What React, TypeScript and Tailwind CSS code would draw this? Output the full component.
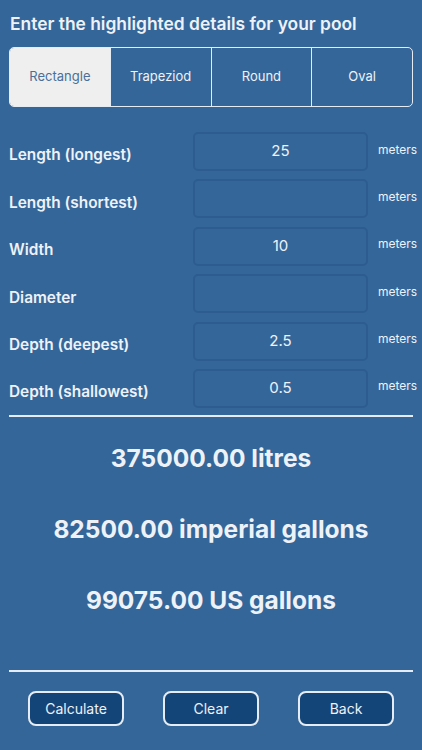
import React from "react";

const rows = [
  { label: "Length (longest)", value: "25" },
  { label: "Length (shortest)", value: "" },
  { label: "Width", value: "10" },
  { label: "Diameter", value: "" },
  { label: "Depth (deepest)", value: "2.5" },
  { label: "Depth (shallowest)", value: "0.5" },
];

const tabs = ["Rectangle", "Trapeziod", "Round", "Oval"];

export default function App() {
  return (
    <div
      className="w-[422px] h-[750px] bg-[#34669a] text-[#eef2f7] overflow-hidden flex flex-col"
      style={{ fontFamily: "Inter, 'Noto Sans', sans-serif" }}
    >
      <div className="pl-[10px] pt-[12px] text-[17.4px] leading-[24px] font-semibold">
        Enter the highlighted details for your pool
      </div>

      <div className="mx-[9px] mt-[11px] h-[60px] flex border border-[#e6ecf3] rounded-[5px] overflow-hidden">
        {tabs.map((t, i) => (
          <div
            key={t}
            className={
              i === 0
                ? "flex-1 flex items-center justify-center bg-[#efefef] text-[#4a6f98] text-[13px]"
                : "flex-1 flex items-center justify-center border-l border-[#e6ecf3] text-[13px]"
            }
          >
            {t}
          </div>
        ))}
      </div>

      <div className="mt-[25px] flex flex-col gap-[8.4px]">
        {rows.map((r) => (
          <div key={r.label} className="h-[39px] flex items-center">
            <div className="w-[193px] pl-[9px] pt-[7px] text-[15.4px] font-semibold">
              {r.label}
            </div>
            <div className="w-[175px] h-[39px] rounded-[5px] border-2 border-[#2d5d90] flex items-center justify-center text-[15px]">
              {r.value}
            </div>
            <div className="pl-[10px] pb-[4px] text-[12px]">meters</div>
          </div>
        ))}
      </div>

      <div className="mx-[9px] mt-[7px] h-[2px] bg-[#e6ecf3]" />

      <div className="flex flex-col items-center text-[24.5px] font-bold">
        <div className="mt-[26px] leading-[30px]">375000.00 litres</div>
        <div className="mt-[41px] leading-[30px]">82500.00 imperial gallons</div>
        <div className="mt-[41px] leading-[30px]">99075.00 US gallons</div>
      </div>

      <div className="mx-[9px] mt-[55px] h-[2px] bg-[#e6ecf3]" />

      <div className="mt-[19px] flex justify-between px-[28px]">
        {["Calculate", "Clear", "Back"].map((b) => (
          <div
            key={b}
            className="w-[96px] h-[35px] rounded-[8px] border-2 border-[#e6ecf3] bg-[#144579] flex items-center justify-center text-[14px]"
          >
            {b}
          </div>
        ))}
      </div>
    </div>
  );
}
